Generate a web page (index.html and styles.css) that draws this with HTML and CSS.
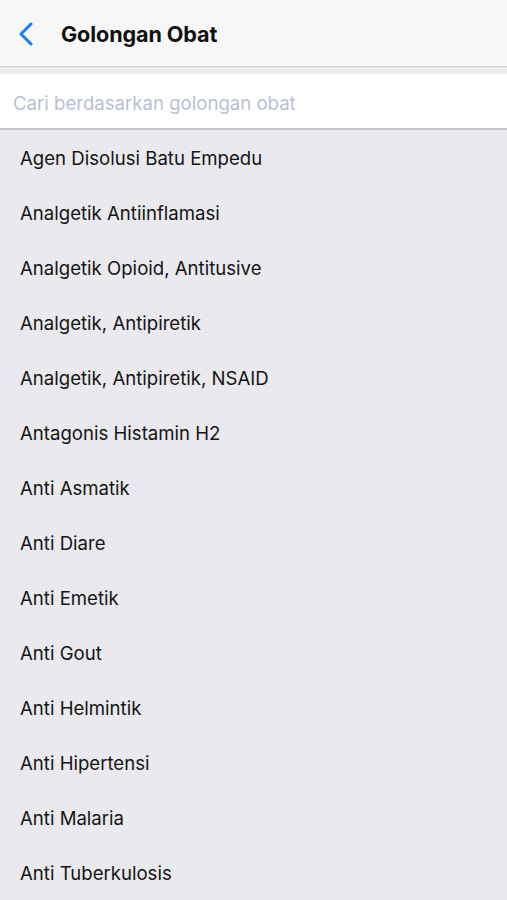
FILE: index.html
```html
<!DOCTYPE html>
<html>
<head>
<meta charset="utf-8">
<link rel="stylesheet" href="styles.css">
</head>
<body>
<header class="nav">
  <svg class="back" width="16" height="24" viewBox="0 0 16 24"><path d="M13 2 L3 12 L13 22" fill="none" stroke="#1b7cf4" stroke-width="3" stroke-linecap="round" stroke-linejoin="round"/></svg>
  <h1 class="title">Golongan Obat</h1>
</header>
<div class="gap"></div>
<div class="search">Cari berdasarkan golongan obat</div>
<ul class="list">
  <li>Agen Disolusi Batu Empedu</li>
  <li>Analgetik Antiinflamasi</li>
  <li>Analgetik Opioid, Antitusive</li>
  <li>Analgetik, Antipiretik</li>
  <li>Analgetik, Antipiretik, NSAID</li>
  <li>Antagonis Histamin H2</li>
  <li>Anti Asmatik</li>
  <li>Anti Diare</li>
  <li>Anti Emetik</li>
  <li>Anti Gout</li>
  <li>Anti Helmintik</li>
  <li>Anti Hipertensi</li>
  <li>Anti Malaria</li>
  <li>Anti Tuberkulosis</li>
</ul>
</body>
</html>
```
FILE: styles.css
```css
html, body { margin: 0; padding: 0; }
body {
  background: #e9e9ee;
  font-family: "Inter", "Liberation Sans", sans-serif;
  color: #111;
  overflow: hidden;
  height: 900px;
}
.nav {
  background: #f7f7f7;
  border-bottom: 1px solid #cfcfcf;
  display: flex;
  align-items: center;
  padding: 2px 0 0 18px;
  box-sizing: border-box;
  height: 67px;
}
.back { display: block; }
.title {
  margin: 0 0 0 27px;
  font-size: 21.6px;
  font-weight: 700;
  letter-spacing: -0.1px;
}
.gap { height: 7px; background: #ebebeb; }
.search {
  height: 54px;
  background: #fff;
  border-bottom: 2px solid #c3c3ca;
  display: flex;
  align-items: center;
  padding: 4px 0 0 13px;
  box-sizing: border-box;
  height: 56px;
  font-size: 18.6px;
  color: #b7bfd7;
}
.list { list-style: none; margin: 0; padding: 0; }
.list li {
  height: 55px;
  display: flex;
  align-items: center;
  padding-left: 20px;
  font-size: 18.6px;
  color: #151515;
}
```
